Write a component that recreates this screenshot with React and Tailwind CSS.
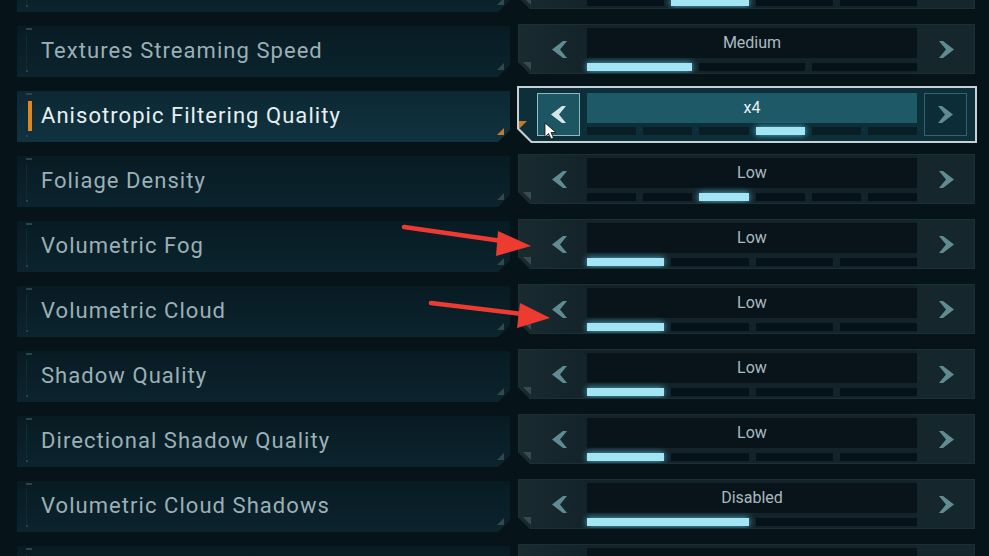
import React from 'react'

const rows = [
  { label: '', value: '', segs: 4, fill: 1 },
  { label: 'Textures Streaming Speed', value: 'Medium', segs: 3, fill: 0 },
  { label: 'Anisotropic Filtering Quality', value: 'x4', segs: 6, fill: 3, active: true },
  { label: 'Foliage Density', value: 'Low', segs: 6, fill: 2 },
  { label: 'Volumetric Fog', value: 'Low', segs: 4, fill: 0 },
  { label: 'Volumetric Cloud', value: 'Low', segs: 4, fill: 0 },
  { label: 'Shadow Quality', value: 'Low', segs: 4, fill: 0 },
  { label: 'Directional Shadow Quality', value: 'Low', segs: 4, fill: 0 },
  { label: 'Volumetric Cloud Shadows', value: 'Disabled', segs: 2, fill: 0 },
  { label: '', value: '', segs: 4, fill: 0 },
]

function Chevron({ dir = 'left', color = '#5f8c93' }) {
  const d = dir === 'left'
    ? 'M0 8.5 L11 0 L15 0 L8 8.5 L15 17 L11 17 Z'
    : 'M15 8.5 L4 0 L0 0 L7 8.5 L0 17 L4 17 Z'
  return (
    <svg width="15" height="17" viewBox="0 0 15 17">
      <path d={d} fill={color} />
    </svg>
  )
}

function Segments({ count, fill, active }) {
  return (
    <div className="flex gap-[7px] h-[8px]">
      {Array.from({ length: count }).map((_, i) => (
        <div
          key={i}
          className={
            i === fill
              ? 'flex-1 bg-[#a3e5f3] shadow-[0_0_6px_#4fbdd8]'
              : active
                ? 'flex-1 bg-[#0a1e25]'
                : 'flex-1 bg-[#06121a]'
          }
        />
      ))}
    </div>
  )
}

function Label({ row }) {
  const active = row.active
  return (
    <div
      className={
        'relative mt-[2px] ml-[17px] w-[493px] h-[51px] flex items-center [clip-path:polygon(0_0,100%_0,100%_calc(100%-12px),calc(100%-12px)_100%,0_100%)] ' +
        (active
          ? 'bg-gradient-to-b from-[#0c2834] to-[#10333f]'
          : 'bg-gradient-to-b from-[#081b23] to-[#0b242e]')
      }
    >
      <div className="absolute left-[9px] top-[2px] w-[6px] h-[2px] bg-[#2c434b]" />
      <div className="absolute left-[9px] top-[8px] bottom-[8px] w-[1px] bg-[#112a33]" />
      <div className="absolute left-[9px] bottom-[5px] w-[2px] h-[2px] bg-[#2c434b]" />
      {active && <div className="absolute left-[11px] top-[10px] w-[4px] h-[30px] bg-[#e0861c]" />}
      <div
        className={
          'absolute right-[6px] bottom-[7px] w-[7px] h-[7px] [clip-path:polygon(0_100%,100%_0,100%_100%)] ' +
          (active ? 'bg-[#c47a26]' : 'bg-[#34474e]')
        }
      />
      <span
        className={
          'pl-[24px] -mt-[2px] text-[22px] tracking-[1.05px] ' + (active ? 'text-[#e6eff1]' : 'text-[#9bb0b6]')
        }
        style={{ fontFamily: 'Roboto, "Liberation Sans", sans-serif' }}
      >
        {row.label}
      </span>
    </div>
  )
}

function Control({ row }) {
  if (row.active) {
    return (
      <div className="relative -mt-[3px] ml-[7px] w-[460px] h-[57px] bg-[#c4d2d5] p-[2px] [clip-path:polygon(0_0,100%_0,100%_100%,14px_100%,0_calc(100%-14px))]">
        <div className="w-full h-full bg-[#0d2f3a] flex items-center pl-[18px] pr-[8px] [clip-path:polygon(0_0,100%_0,100%_100%,13px_100%,0_calc(100%-13px))]">
          <div className="w-[43px] h-[43px] border border-[#8fb9bf] bg-[#1c5662] flex items-center justify-center">
            <Chevron dir="left" color="#d5e4e7" />
          </div>
          <div className="ml-[7px] w-[330px] h-[43px] flex flex-col">
            <div className="h-[30px] bg-[#1d5966] flex items-center justify-center text-[16px] text-[#e8f0f2]"
              style={{ fontFamily: 'Roboto, "Liberation Sans", sans-serif' }}>
              {row.value}
            </div>
            <div className="mt-[4px]">
              <Segments count={row.segs} fill={row.fill} active />
            </div>
          </div>
          <div className="ml-[7px] w-[43px] h-[43px] border border-[#33636c] bg-[#0c2d37] flex items-center justify-center">
            <Chevron dir="right" />
          </div>
        </div>
        <div className="absolute left-[2px] bottom-[14px] w-[8px] h-[8px] bg-[#c47a26] [clip-path:polygon(0_0,100%_0,0_100%)]" />
      </div>
    )
  }
  return (
    <div className="relative ml-[8px] w-[457px] h-[50px] bg-[#14232a] flex [clip-path:polygon(0_0,100%_0,100%_100%,12px_100%,0_calc(100%-12px))]">
      <div className="absolute inset-0 border border-[#1d2e35] pointer-events-none" />
      <div className="w-[69px] flex items-center justify-center pl-[14px] bg-gradient-to-r from-[#192a31] to-[#14232a]">
        <Chevron dir="left" />
      </div>
      <div className="w-[330px] flex flex-col pt-[4px]">
        <div
          className="h-[30px] bg-[#08141a] flex items-center justify-center text-[16px] text-[#a8bbc0]"
          style={{ fontFamily: 'Roboto, "Liberation Sans", sans-serif' }}
        >
          {row.value}
        </div>
        <div className="mt-[5px]">
          <Segments count={row.segs} fill={row.fill} />
        </div>
      </div>
      <div className="flex-1 flex items-center justify-center bg-[#16262d]">
        <Chevron dir="right" />
      </div>
      <div className="absolute left-[5px] bottom-[4px] w-[8px] h-[8px] bg-[#3a4a50] [clip-path:polygon(0_0,100%_0,100%_100%)]" />
    </div>
  )
}

export default function App() {
  return (
    <div className="relative w-[989px] h-[556px] overflow-hidden bg-[#061419]">
      <div className="flex flex-col -mt-[41px]">
        {rows.map((row, i) => (
          <div key={i} className="h-[65px] flex items-start">
            <Label row={row} />
            <Control row={row} />
          </div>
        ))}
      </div>

      <svg className="absolute inset-0 pointer-events-none" width="989" height="556" viewBox="0 0 989 556">
        <line x1="404" y1="227" x2="502" y2="241" stroke="#ee3b32" strokeWidth="4.5" strokeLinecap="round" />
        <polygon points="531,246 498,231 496,256" fill="#ee3b32" />
        <line x1="431" y1="303" x2="522" y2="314" stroke="#ee3b32" strokeWidth="4.5" strokeLinecap="round" />
        <polygon points="550,318 520,303 517,328" fill="#ee3b32" />
        <path d="M545 123 L545 137 L548.5 133.5 L551 139 L553.5 138 L551 132.5 L556 132.5 Z" fill="#ffffff" stroke="#111" strokeWidth="0.8" />
      </svg>
    </div>
  )
}
